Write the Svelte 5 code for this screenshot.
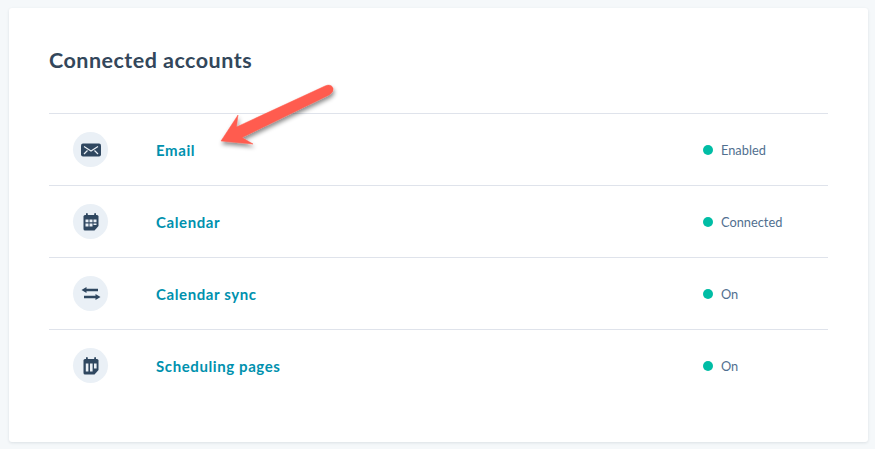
<script>
  const accounts = [
    { name: 'Email', status: 'Enabled', icon: 'mail' },
    { name: 'Calendar', status: 'Connected', icon: 'calendar' },
    { name: 'Calendar sync', status: 'On', icon: 'sync' },
    { name: 'Scheduling pages', status: 'On', icon: 'pages' }
  ];
</script>

<main>
  <section class="card">
    <h2>Connected accounts</h2>
    <ul>
      {#each accounts as item}
        <li>
          <span class="badge">
            <svg width="20" height="20" viewBox="0 0 20 20">
              {#if item.icon === 'mail'}
                <rect x="0" y="3.5" width="20" height="13" rx="2" fill="#2f4760" />
                <path d="M3 6.5 L10 11 L17 6.5 M3 14 L6.5 10.5 M17 14 L13.5 10.5" fill="none" stroke="#eaf0f6" stroke-width="1.2" />
              {:else if item.icon === 'calendar'}
                <path d="M4 3h12a1.5 1.5 0 0 1 1.500 1.500V14l-4 4.500H4A1.500 1.500 0 0 1 2.500 17V4.500A1.500 1.500 0 0 1 4 3z" fill="#2f4760" />
                <rect x="5" y="1" width="1.800" height="4" rx="0.900" fill="#2f4760" />
                <rect x="13.200" y="1" width="1.800" height="4" rx="0.900" fill="#2f4760" />
                <path d="M4.500 7.500h3v2.800h-3zM8.500 7.500h3v2.800h-3zM12.500 7.500h3v2.800h-3zM4.500 11.500h3v3h-3zM8.500 11.500h3v3h-3zM12.500 11.500h3v1.500h-3z" fill="#eaf0f6" />
              {:else if item.icon === 'sync'}
                <path d="M5.500 3 L0.500 6 L5.500 9 V7.300 H17 V4.700 H5.500 Z" fill="#2f4760" />
                <path d="M14.500 10 L19.500 13 L14.500 16 V14.300 H3 V11.700 H14.500 Z" fill="#2f4760" />
              {:else}
                <path d="M4 3h12a1.5 1.5 0 0 1 1.500 1.500V14l-4 4.500H4A1.500 1.500 0 0 1 2.500 17V4.500A1.500 1.500 0 0 1 4 3z" fill="#2f4760" />
                <rect x="5" y="1" width="1.800" height="4" rx="0.900" fill="#2f4760" />
                <rect x="13.200" y="1" width="1.800" height="4" rx="0.900" fill="#2f4760" />
                <path d="M4.800 7.500h2.600v8h-2.600zM9 7.500h2.600v8H9zM13 7.500h2.600v5H13z" fill="#eaf0f6" />
              {/if}
            </svg>
          </span>
          <a href="#top" class="name">{item.name}</a>
          <span class="status"><i></i>{item.status}</span>
        </li>
      {/each}
    </ul>

    <svg class="arrow" width="130" height="80" viewBox="0 0 130 80">
      <defs>
        <filter id="shade" x="-20%" y="-20%" width="150%" height="160%">
          <feDropShadow dx="1" dy="3" stdDeviation="2" flood-color="#000" flood-opacity="0.45" />
        </filter>
      </defs>
      <path d="M5 61 L22 35 L20.500 47 L109 6 Q115 3.500 117 8 Q118 12 113 15 L26 57.500 L37 64 Z" fill="#ff5c4f" stroke="#ff5c4f" stroke-width="0.5" stroke-linejoin="round" filter="url(#shade)" />
    </svg>
  </section>
</main>

<style>
  :global(body) {
    margin: 0;
    background: #f5f8fa;
  }

  main {
    height: 449px;
    padding: 8px 7px 7px 9px;
    box-sizing: border-box;
    font-family: Lato, "Liberation Sans", sans-serif;
  }

  .card {
    position: relative;
    height: 434px;
    padding: 0 40px;
    box-sizing: border-box;
    background: #ffffff;
    border-radius: 3px;
    box-shadow: 0 1px 3px rgba(45, 62, 80, 0.12);
  }

  h2 {
    margin: 0;
    padding-top: 40px;
    height: 65px;
    box-sizing: border-box;
    font-size: 21.5px;
    line-height: 25px;
    font-weight: 700;
    letter-spacing: 0.48px;
    color: #33475b;
  }

  ul {
    list-style: none;
    margin: 0;
    padding: 0;
    margin-top: 40px;
  }

  li {
    display: grid;
    grid-template-columns: 107px 1fr 125px;
    align-items: center;
    height: 72px;
    box-sizing: border-box;
    border-top: 1px solid #dfe3eb;
  }

  .badge {
    display: flex;
    align-items: center;
    justify-content: center;
    width: 35px;
    height: 35px;
    margin-left: 24px;
    border-radius: 50%;
    background: #eaf0f6;
  }

  .name {
    font-size: 15px;
    font-weight: 700;
    letter-spacing: 0.6px;
    color: #0091ae;
    text-decoration: none;
  }

  .status {
    display: flex;
    align-items: center;
    gap: 8px;
    font-size: 12.8px;
    color: #516f90;
  }

  .status i {
    width: 10px;
    height: 10px;
    border-radius: 50%;
    background: #00bda5;
  }

  .arrow {
    position: absolute;
    left: 207px;
    top: 72px;
  }
</style>
